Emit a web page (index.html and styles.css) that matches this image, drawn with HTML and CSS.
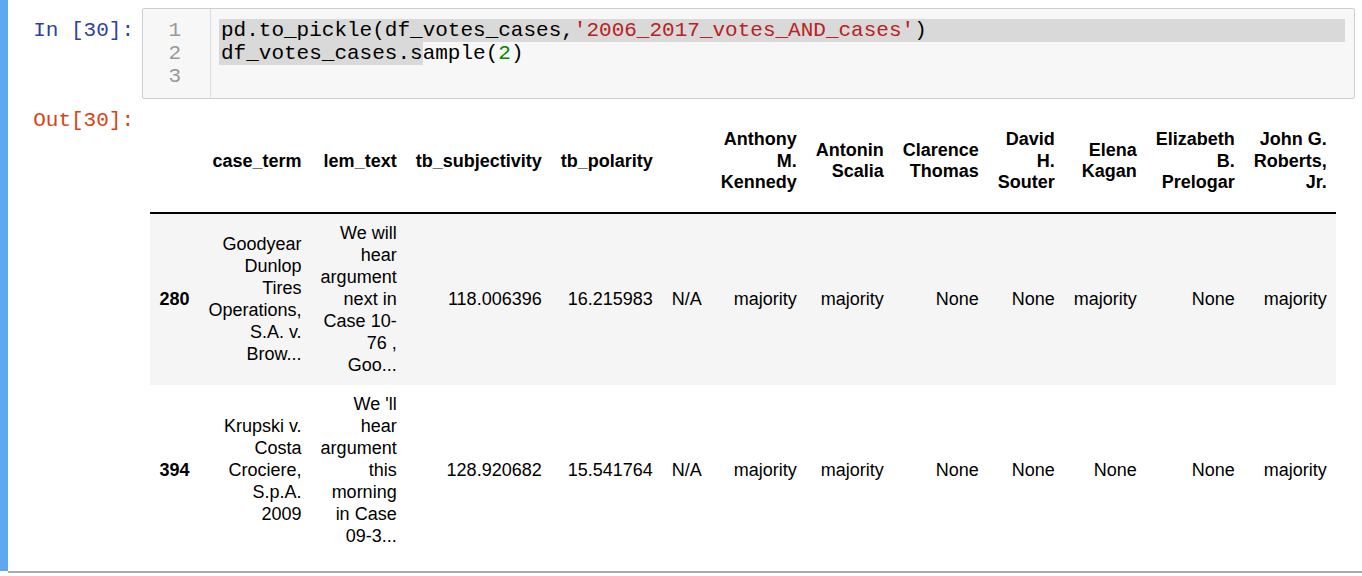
FILE: index.html
```html
<!DOCTYPE html>
<html>
<head>
<meta charset="utf-8">
<title>Notebook cell</title>
<link rel="stylesheet" href="styles.css">
</head>
<body>
<div class="cell">
  <div class="input">
    <div class="prompt prompt-in">In&nbsp;[30]:</div>
    <div class="editor">
      <div class="gutter">
        <div>1</div>
        <div>2</div>
        <div>3</div>
      </div>
      <div class="code">
        <div class="line sel-full">pd.to_pickle(df_votes_cases,<span class="str">'2006_2017_votes_AND_cases'</span>)</div>
        <div class="line"><span class="sel">df_votes_cases.s</span>ample(<span class="num">2</span>)</div>
        <div class="line">&nbsp;</div>
      </div>
    </div>
  </div>
  <div class="output">
    <div class="prompt prompt-out">Out[30]:</div>
    <div class="output-sub">
      <table class="dataframe">
        <thead>
          <tr>
            <th></th>
            <th>case_term</th>
            <th>lem_text</th>
            <th>tb_subjectivity</th>
            <th>tb_polarity</th>
            <th></th>
            <th>Anthony<br>M.<br>Kennedy</th>
            <th>Antonin<br>Scalia</th>
            <th>Clarence<br>Thomas</th>
            <th>David<br>H.<br>Souter</th>
            <th>Elena<br>Kagan</th>
            <th>Elizabeth<br>B.<br>Prelogar</th>
            <th>John G.<br>Roberts,<br>Jr.</th>
          </tr>
        </thead>
        <tbody>
          <tr>
            <th>280</th>
            <td>Goodyear<br>Dunlop<br>Tires<br>Operations,<br>S.A. v.<br>Brow...</td>
            <td>We will<br>hear<br>argument<br>next in<br>Case 10-<br>76 ,<br>Goo...</td>
            <td>118.006396</td>
            <td>16.215983</td>
            <td>N/A</td>
            <td>majority</td>
            <td>majority</td>
            <td>None</td>
            <td>None</td>
            <td>majority</td>
            <td>None</td>
            <td>majority</td>
          </tr>
          <tr>
            <th>394</th>
            <td>Krupski v.<br>Costa<br>Crociere,<br>S.p.A.<br>2009</td>
            <td>We 'll<br>hear<br>argument<br>this<br>morning<br>in Case<br>09-3...</td>
            <td>128.920682</td>
            <td>15.541764</td>
            <td>N/A</td>
            <td>majority</td>
            <td>majority</td>
            <td>None</td>
            <td>None</td>
            <td>None</td>
            <td>None</td>
            <td>majority</td>
          </tr>
        </tbody>
      </table>
    </div>
  </div>
</div>
<div class="divider"></div>
</body>
</html>
```
FILE: styles.css
```css
html, body {
  margin: 0;
  padding: 0;
  background: #ffffff;
}

body {
  font-family: "Liberation Sans", Arial, sans-serif;
  color: #000;
}

.cell {
  border-left: 8px solid #5ea8f1;
  padding: 8px 7px 8px 0;
}

.input,
.output {
  display: flex;
  align-items: flex-start;
}

.prompt {
  flex: none;
  width: 134px;
  box-sizing: border-box;
  padding-right: 8px;
  text-align: right;
  font-family: "Liberation Mono", "Courier New", monospace;
  font-size: 21px;
  line-height: 23px;
  white-space: nowrap;
}

.prompt-in {
  color: #303f9f;
  padding-top: 11px;
}

.prompt-out {
  color: #d84315;
  padding-top: 10px;
}

.editor {
  flex: 1;
  display: flex;
  border: 1px solid #cfcfcf;
  border-radius: 2px;
  background: #f7f7f7;
  font-family: "Liberation Mono", "Courier New", monospace;
  font-size: 21px;
  line-height: 23px;
}

.gutter {
  flex: none;
  width: 68px;
  box-sizing: border-box;
  border-right: 1px solid #dddddd;
  padding: 10px 29px 10px 0;
  text-align: right;
  color: #999999;
}

.code {
  flex: 1;
  padding: 10px 9px 10px 8px;
  color: #000;
}

.line {
  padding-left: 2px;
  white-space: pre;
}

.sel-full {
  background: #d9d9d9;
}

.sel {
  background: #d9d9d9;
  margin-left: -2px;
  padding-left: 2px;
}

.str {
  color: #ba2121;
}

.num {
  color: #008800;
}

.output-sub {
  flex: 1;
  padding: 12px 8px 8px 8px;
  overflow: hidden;
}

.dataframe {
  border-collapse: collapse;
  border-spacing: 0;
  font-size: 18px;
  color: #000;
}

.dataframe th,
.dataframe td {
  text-align: right;
  vertical-align: middle;
  white-space: nowrap;
  padding: 8px 9.5px;
  line-height: 22px;
}

.dataframe thead th {
  padding-top: 18px;
  padding-bottom: 18px;
  border-bottom: 2px solid #000;
  line-height: 21.5px;
}

.dataframe tbody th {
  font-weight: bold;
}

.dataframe tbody tr:nth-child(odd) {
  background: #f5f5f5;
}

.dataframe tbody tr:nth-child(odd) td,
.dataframe tbody tr:nth-child(odd) th {
  padding-top: 8.5px;
  padding-bottom: 8.5px;
}

.divider {
  margin-left: 8px;
  height: 2px;
  background: #aaaaaa;
}
```
